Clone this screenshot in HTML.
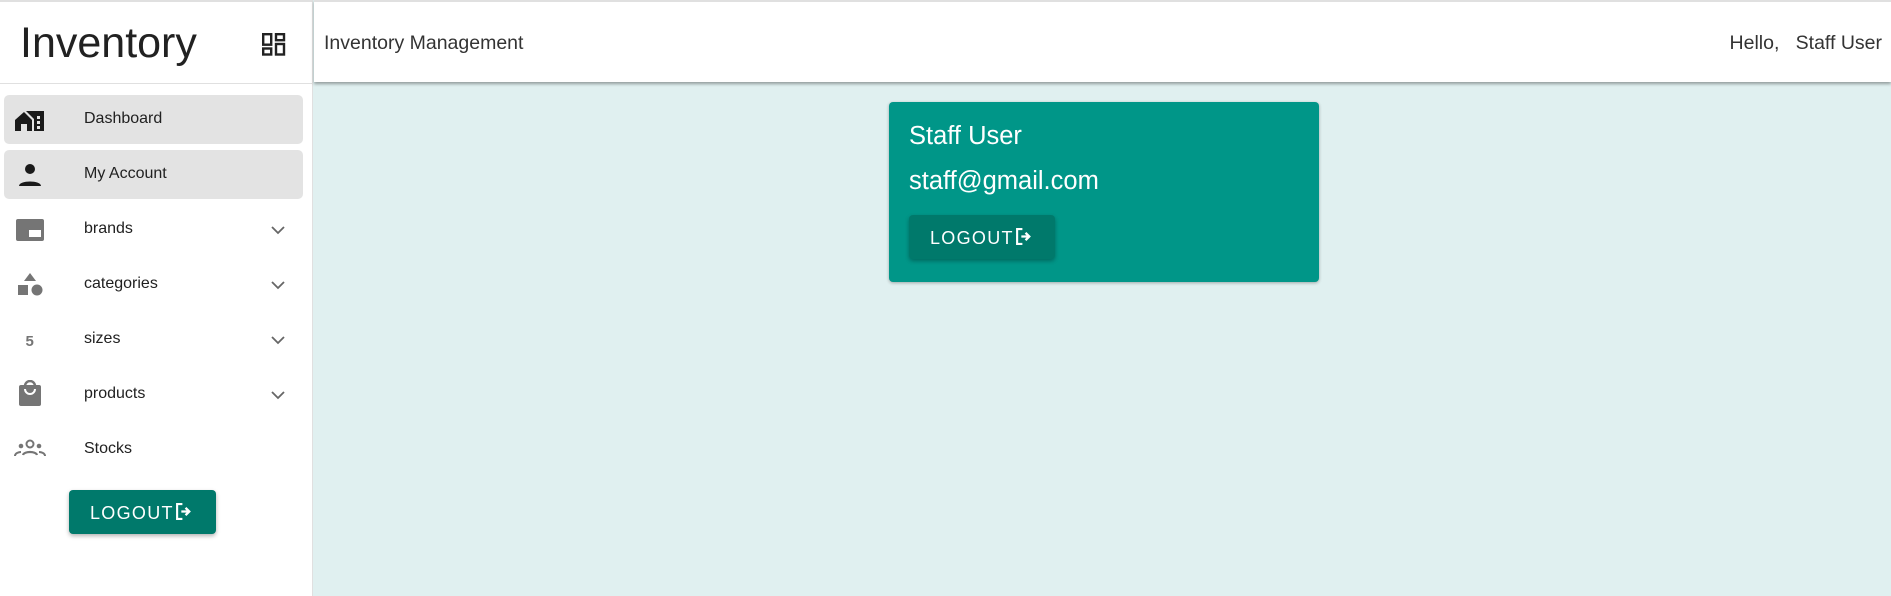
<!DOCTYPE html>
<html><head><meta charset="utf-8"><style>
*{box-sizing:border-box;margin:0;padding:0}
body{width:1891px;height:596px;overflow:hidden;font-family:"Liberation Sans",sans-serif;background:#e0f0f0;position:relative}
.side{position:absolute;left:0;top:0;width:313px;height:596px;background:#fff;border-right:1px solid #e0e0e0;border-top:2px solid #e0e0e0}
.brand{position:absolute;left:20px;top:17px;font-size:43px;color:#212121}
.grid{position:absolute;left:262px;top:31px}
.hdrline{position:absolute;left:0;top:81px;width:313px;height:1px;background:#e0e0e0}
.item{position:absolute;left:4px;width:299px;height:49px;border-radius:5px}
.item.sel{background:#e3e3e3}
.item .t{position:absolute;left:80px;top:15px;font-size:16px;color:#212121}
.item svg.ic{position:absolute;left:10px;top:12px}
.item .chev{position:absolute;left:266px;top:19px}
.lbtn{position:absolute;left:69px;top:488px;width:147px;height:44px;background:#00796b;border-radius:4px;box-shadow:0 2px 4px rgba(0,0,0,.3);color:#fff;font-size:18px;letter-spacing:1.3px;padding:12px 0 0 21px}
.top{position:absolute;left:314px;top:0;width:1577px;height:82px;background:#fff;border-top:2px solid #e0e0e0;box-shadow:0 2px 3px rgba(0,0,0,.35)}
.top .l{position:absolute;left:10px;top:30px;font-size:19.5px;color:#333}
.top .r{position:absolute;right:9px;top:30px;font-size:19.5px;color:#333}
.card{position:absolute;left:889px;top:102px;width:430px;height:180px;background:#009688;border-radius:4px;box-shadow:0 1px 3px rgba(0,0,0,.3);color:#fff}
.card .n{position:absolute;left:20px;top:20px;font-size:25.5px}
.card .e{position:absolute;left:20px;top:65px;font-size:25.5px}
.cbtn{position:absolute;left:20px;top:113px;width:146px;height:44px;background:#00796b;border-radius:4px;box-shadow:0 2px 4px rgba(0,0,0,.3);font-size:18px;letter-spacing:1.3px;padding:12px 0 0 21px}
</style></head><body>
<div class="side">
<div class="brand">Inventory</div>
<svg class="grid" width="24" height="23" viewBox="0 0 24 23"><g fill="none" stroke="#222" stroke-width="2.4"><rect x="1.2" y="1.2" width="8" height="10.5"/><rect x="1.2" y="15.5" width="8" height="6"/><rect x="14" y="1.2" width="8" height="6"/><rect x="14" y="11" width="8" height="10.5"/></g></svg>
<div class="hdrline"></div>
<div class="item sel" style="top:93px"><svg class="ic" width="32" height="24" viewBox="0 0 32 24"><path fill="#1a1a1a" d="M1 24V13L10 5l8 8v11h-5v-7H7v7z"/><path fill="#1a1a1a" d="M12 4h18v20H20V12z"/><rect x="23" y="9" width="3" height="3" fill="#e3e3e3"/><rect x="23" y="14" width="3" height="3" fill="#e3e3e3"/><rect x="23" y="19" width="3" height="3" fill="#e3e3e3"/></svg><span class="t">Dashboard</span></div>
<div class="item sel" style="top:148px"><svg class="ic" width="32" height="24" viewBox="0 0 32 24"><circle cx="16" cy="7" r="5" fill="#1a1a1a"/><path fill="#1a1a1a" d="M5 24c0-6 22-6 22 0z"/></svg><span class="t">My Account</span></div>
<div class="item" style="top:203px"><svg class="ic" width="32" height="24" viewBox="0 0 32 24"><rect x="2" y="2" width="28" height="22" rx="2" fill="#757575"/><rect x="15" y="13" width="12" height="7" fill="#fff"/></svg><span class="t">brands</span><svg class="chev" width="16" height="12" viewBox="0 0 16 12"><path d="M2 3l6 6 6-6" fill="none" stroke="#666" stroke-width="1.8"/></svg></div>
<div class="item" style="top:258px"><svg class="ic" width="32" height="26" viewBox="0 0 32 26"><path fill="#757575" d="M16 1l6 8H10z"/><rect x="4" y="13" width="10" height="10" fill="#757575"/><circle cx="23" cy="18" r="5.5" fill="#757575"/></svg><span class="t">categories</span><svg class="chev" width="16" height="12" viewBox="0 0 16 12"><path d="M2 3l6 6 6-6" fill="none" stroke="#666" stroke-width="1.8"/></svg></div>
<div class="item" style="top:313px"><svg class="ic" width="32" height="24" viewBox="0 0 32 24"><text x="11.5" y="19" font-family="Liberation Sans" font-weight="bold" font-size="15" fill="#757575">5</text></svg><span class="t">sizes</span><svg class="chev" width="16" height="12" viewBox="0 0 16 12"><path d="M2 3l6 6 6-6" fill="none" stroke="#666" stroke-width="1.8"/></svg></div>
<div class="item" style="top:368px"><svg class="ic" width="32" height="26" viewBox="0 0 32 26" style="top:10px"><rect x="5" y="5" width="22" height="21" rx="2" fill="#757575"/><path d="M11 6a5 5 0 0 1 10 0" fill="none" stroke="#757575" stroke-width="2.4"/><path d="M11 9a5 5 0 0 0 10 0" fill="none" stroke="#fff" stroke-width="2"/></svg><span class="t">products</span><svg class="chev" width="16" height="12" viewBox="0 0 16 12"><path d="M2 3l6 6 6-6" fill="none" stroke="#666" stroke-width="1.8"/></svg></div>
<div class="item" style="top:423px"><svg class="ic" width="32" height="24" viewBox="0 0 32 24"><circle cx="16" cy="7" r="3.5" fill="none" stroke="#757575" stroke-width="2"/><circle cx="7" cy="9" r="2.3" fill="#757575"/><circle cx="25" cy="9" r="2.3" fill="#757575"/><path d="M9 18c1-4 13-4 14 0" fill="none" stroke="#757575" stroke-width="2.2"/><path d="M1 19c0-3 4-4 6-4M31 19c0-3-4-4-6-4" fill="none" stroke="#757575" stroke-width="2"/></svg><span class="t">Stocks</span></div>
<div class="lbtn">LOGOUT<svg width="19" height="19" viewBox="0 0 18 18" style="vertical-align:-2px;margin-left:1px"><path d="M7 2H2v14h5" fill="none" stroke="#fff" stroke-width="2"/><path d="M6 9h7M10 5.5L13.5 9 10 12.5" fill="none" stroke="#fff" stroke-width="2.2"/></svg></div>
</div>
<div class="top"><span class="l">Inventory Management</span><span class="r">Hello,&nbsp;&nbsp; Staff User</span></div>
<div class="card"><div class="n">Staff User</div><div class="e">staff@gmail.com</div>
<div class="cbtn">LOGOUT<svg width="19" height="19" viewBox="0 0 18 18" style="vertical-align:-2px;margin-left:1px"><path d="M7 2H2v14h5" fill="none" stroke="#fff" stroke-width="2"/><path d="M6 9h7M10 5.5L13.5 9 10 12.5" fill="none" stroke="#fff" stroke-width="2.2"/></svg></div></div>
</body></html>
